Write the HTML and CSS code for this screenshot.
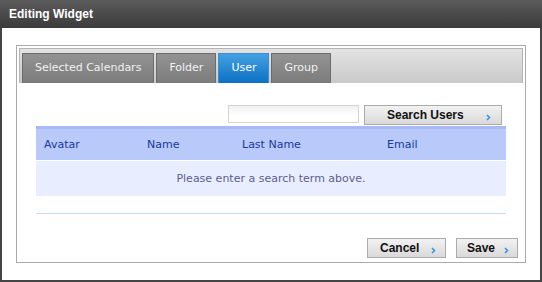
FILE: index.html
```html
<!DOCTYPE html>
<html lang="en">
<head>
  <meta charset="UTF-8" />
  <title>Editing Widget</title>
  <link rel="stylesheet" href="styles.css">
</head>
<body>

  <div class="window">
    <div class="window-title">Editing Widget</div>

    <div class="window-body">
      <div class="panel">
        <div class="tabs">
          <div class="tab">Selected Calendars</div>
          <div class="tab">Folder</div>
          <div class="tab active">User</div>
          <div class="tab">Group</div>
        </div>

        <div class="content">
          <div class="search-row">
            <input type="text" class="search-input" />
            <button type="button" class="btn btn-search">
              <span class="btn-label">Search Users</span>
              <svg class="arrow" width="5" height="7" viewBox="0 0 5 7"><path d="M1 1 L3.5 3.5 L1 6" fill="none" stroke="#3d93e6" stroke-width="1.6"/></svg>
            </button>
          </div>

          <table class="users">
            <thead>
              <tr>
                <th class="col-avatar">Avatar</th>
                <th class="col-name">Name</th>
                <th class="col-last">Last Name</th>
                <th>Email</th>
              </tr>
            </thead>
            <tbody>
              <tr>
                <td colspan="4" class="empty">Please enter a search term above.</td>
              </tr>
            </tbody>
          </table>

          <div class="divider"></div>
        </div>

        <div class="footer">
          <button type="button" class="btn btn-cancel">
            <span class="btn-label">Cancel</span>
            <svg class="arrow" width="5" height="7" viewBox="0 0 5 7"><path d="M1 1 L3.5 3.5 L1 6" fill="none" stroke="#3d93e6" stroke-width="1.6"/></svg>
          </button>
          <button type="button" class="btn btn-save">
            <span class="btn-label">Save</span>
            <svg class="arrow" width="5" height="7" viewBox="0 0 5 7"><path d="M1 1 L3.5 3.5 L1 6" fill="none" stroke="#3d93e6" stroke-width="1.6"/></svg>
          </button>
        </div>
      </div>
    </div>
  </div>

</body>
</html>
```

FILE: styles.css
```css
body {
  margin: 0;
  background: #fff;
  font-family: "DejaVu Sans", Verdana, sans-serif;
}

.window {
  width: 542px;
  height: 282px;
  box-sizing: border-box;
  border: 2px solid #454545;
  border-top: none;
  background: #fff;
  display: flex;
  flex-direction: column;
}

.window-title {
  height: 28px;
  line-height: 28px;
  margin: 0 -2px;
  padding-left: 9px;
  background: linear-gradient(#5b5b5b, #3b3b3b);
  color: #fff;
  font-family: "Liberation Sans", Arial, sans-serif;
  font-weight: bold;
  font-size: 12px;
}

.window-body {
  flex: 1;
  padding: 17px 14px;
  display: flex;
}

.panel {
  flex: 1;
  border: 1px solid #aaa;
  display: flex;
  flex-direction: column;
}

.tabs {
  margin: 2px 2px 0;
  height: 35px;
  box-sizing: border-box;
  padding: 4px 2px 0;
  border: 1px solid #b4b4b4;
  border-bottom: none;
  background: linear-gradient(#e3e3e3, #c9c9c9);
  display: flex;
  gap: 2px;
  align-items: flex-end;
}

.tab {
  height: 30px;
  box-sizing: border-box;
  padding: 0 12px;
  line-height: 28px;
  font-size: 11px;
  color: #f2f2f2;
  background: linear-gradient(#939393, #7c7c7c);
  border: 1px solid #6c6c6c;
  border-bottom: none;
}

.tab.active {
  background: linear-gradient(#45a0e2, #0b71c3);
  border-color: #3a8fd6;
  color: #fff;
}

.content {
  padding: 0 19px;
}

.search-row {
  margin-top: 22px;
  padding-right: 4px;
  display: flex;
  justify-content: flex-end;
  align-items: flex-start;
  gap: 5px;
}

.search-input {
  width: 131px;
  height: 18px;
  box-sizing: border-box;
  margin: 0;
  border: 1px solid #d4d4d4;
  background: linear-gradient(#f1f1f1, #fff 60%);
}

.btn {
  height: 20px;
  box-sizing: border-box;
  margin: 0;
  border: 1px solid #ababab;
  background: linear-gradient(#f2f2f2, #d9d9d9);
  color: #111;
  font-family: "Liberation Sans", Arial, sans-serif;
  font-weight: bold;
  font-size: 12px;
  display: flex;
  align-items: center;
  cursor: pointer;
}

.arrow {
  margin-top: 5px;
}

.btn-search {
  width: 138px;
  padding: 0 10px 0 22px;
}

.btn-search .btn-label {
  flex: 1;
  text-align: left;
}

.users {
  width: 470px;
  margin-top: 1px;
  border-collapse: collapse;
  table-layout: fixed;
  font-size: 11px;
}

.users th {
  height: 33px;
  box-sizing: border-box;
  padding: 0 0 0 8px;
  text-align: left;
  font-weight: normal;
  color: #173a9c;
  background: #b9c9fa;
  border-top: 3px solid #a8b9f6;
}

.col-avatar { width: 103px; }
.col-name { width: 95px; }
.col-last { width: 145px; }

.users td.empty {
  height: 35px;
  box-sizing: border-box;
  text-align: center;
  color: #5e5f8c;
  background: #e8eeff;
  border-top: 1px solid #fff;
}

.divider {
  margin-top: 17px;
  width: 470px;
  border-top: 1px solid #c7def0;
}

.footer {
  margin-top: 24px;
  padding-right: 7px;
  display: flex;
  justify-content: flex-end;
  gap: 10px;
}

.btn-cancel {
  width: 79px;
  padding: 0 9px 0 12px;
}

.btn-save {
  width: 62px;
  padding: 0 8px 0 10px;
}

.btn-cancel .btn-label,
.btn-save .btn-label {
  flex: 1;
  text-align: left;
}
```
